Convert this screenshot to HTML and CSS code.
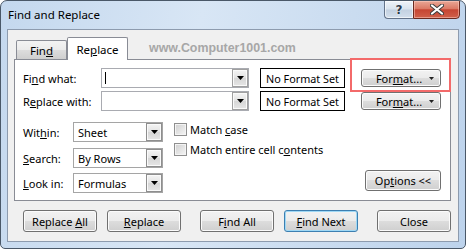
FILE: index.html
```html
<!DOCTYPE html>
<html>
<head>
<meta charset="utf-8">
<link rel="stylesheet" href="styles.css">
</head>
<body>
<div class="window">
  <div class="titlebar">
    <span class="title">Find and Replace</span>
    <div class="caption">
      <div class="cap-help"><span class="q">?</span></div>
      <div class="cap-close">
        <svg width="14" height="11" viewBox="0 0 14 11"><path d="M2 1.5 L12 9.5 M12 1.5 L2 9.5" stroke="#3c3c3c" stroke-width="4" stroke-linecap="round"/><path d="M2 1.5 L12 9.5 M12 1.5 L2 9.5" stroke="#ffffff" stroke-width="2.2" stroke-linecap="round"/></svg>
      </div>
    </div>
  </div>
  <div class="client">
    <div class="tabs">
      <div class="tab"><span>Fin<u>d</u></span></div>
      <div class="tab active"><span>Re<u>p</u>lace</span></div>
      <div class="watermark">www.Computer1001.com</div>
    </div>
    <div class="panel">
      <div class="row">
        <span class="label">Fi<u>n</u>d what:</span>
        <div class="combo"><div class="combo-text"><span class="caret"></span></div><div class="drop"><svg width="7" height="4" viewBox="0 0 7 4"><polygon points="0,0 7,0 3.5,4" fill="#000"/></svg></div></div>
        <div class="nofmt">No Format Set</div>
        <div class="fmt-wrap">
          <div class="btn fmt"><span>For<u>m</u>at...</span><svg class="fmt-arrow" width="5" height="3" viewBox="0 0 5 3"><polygon points="0,0 5,0 2.5,3" fill="#222"/></svg></div>
        </div>
      </div>
      <div class="row row2">
        <span class="label">R<u>e</u>place with:</span>
        <div class="combo"><div class="combo-text"></div><div class="drop"><svg width="7" height="4" viewBox="0 0 7 4"><polygon points="0,0 7,0 3.5,4" fill="#000"/></svg></div></div>
        <div class="nofmt">No Format Set</div>
        <div class="fmt-wrap plain">
          <div class="btn fmt"><span>For<u>m</u>at...</span><svg class="fmt-arrow" width="5" height="3" viewBox="0 0 5 3"><polygon points="0,0 5,0 2.5,3" fill="#222"/></svg></div>
        </div>
      </div>
      <div class="lower">
        <div class="selects">
          <div class="srow"><span class="slabel">Wit<u>h</u>in:</span><div class="select"><span class="stext">Sheet</span><div class="sdrop"><svg width="7" height="4" viewBox="0 0 7 4"><polygon points="0,0 7,0 3.5,4" fill="#000"/></svg></div></div></div>
          <div class="srow s2"><span class="slabel"><u>S</u>earch:</span><div class="select"><span class="stext">By Rows</span><div class="sdrop"><svg width="7" height="4" viewBox="0 0 7 4"><polygon points="0,0 7,0 3.5,4" fill="#000"/></svg></div></div></div>
          <div class="srow s3"><span class="slabel"><u>L</u>ook in:</span><div class="select"><span class="stext">Formulas</span><div class="sdrop"><svg width="7" height="4" viewBox="0 0 7 4"><polygon points="0,0 7,0 3.5,4" fill="#000"/></svg></div></div></div>
        </div>
        <div class="checks">
          <label class="check"><span class="box"></span><span>Match <u>c</u>ase</span></label>
          <label class="check c2"><span class="box"></span><span>Match entire cell c<u>o</u>ntents</span></label>
        </div>
        <div class="btn options"><span>Op<u>t</u>ions &lt;&lt;</span></div>
      </div>
    </div>
    <div class="buttons">
      <div class="btn b1"><span>Replace <u>A</u>ll</span></div>
      <div class="btn b2"><span><u>R</u>eplace</span></div>
      <div class="btn b3"><span>F<u>i</u>nd All</span></div>
      <div class="btn b4 default"><span><u>F</u>ind Next</span></div>
      <div class="btn b5"><span>Close</span></div>
    </div>
  </div>
</div>
</body>
</html>
```
FILE: styles.css
```css
* { box-sizing: border-box; }
html, body { margin: 0; padding: 0; }
body {
  width: 466px; height: 249px; overflow: hidden;
  font-family: "Noto Sans", sans-serif; font-size: 11px; color: #000;
  background: #fff;
}
u { text-decoration: underline; text-underline-offset: 1px; }

.window {
  width: 466px; height: 249px;
  border: 1px solid #4a5868;
  border-radius: 7px 7px 5px 5px;
  background: linear-gradient(100deg, #c4d8ee 0%, #d8e6f5 40%, #cadcf0 70%, #bdd3ec 100%);
  display: flex; flex-direction: column;
  overflow: hidden;
}
.titlebar { height: 28px; flex-shrink: 0; display: flex; align-items: flex-start; }
.title { margin: 6px 0 0 7px; font-size: 11.5px; line-height: 16px; }
.caption { margin-left: auto; margin-right: 5px; margin-top: -1px; display: flex; }
.cap-help {
  width: 29px; height: 19px;
  border: 1px solid #63738a; border-right: none;
  border-radius: 0 0 0 4px;
  background: linear-gradient(#eef3f9 0%, #d9e3ee 48%, #c3d1e1 52%, #d3dfec 100%);
  box-shadow: inset 0 0 0 1px rgba(255,255,255,0.6);
  display: flex; align-items: center; justify-content: center;
}
.q {
  font-family: "DejaVu Sans", sans-serif; font-weight: bold; font-size: 12px; line-height: 12px;
  color: #2c3a4c;
  text-shadow: 0 0 1px #fff, 0 0 1px #fff;
}
.cap-close {
  width: 47px; height: 19px;
  border: 1px solid #6a2a20;
  border-radius: 0 0 4px 0;
  background: linear-gradient(#e9a796 0%, #dc7a66 45%, #c64532 52%, #d0604a 100%);
  box-shadow: inset 0 0 0 1px rgba(255,210,200,0.5);
  display: flex; align-items: center; justify-content: center;
}

.client {
  flex: 1;
  margin: 0 6px 6px 6px;
  background: #f0f0f0;
  border: 1px solid #8d9bae;
  display: flex; flex-direction: column;
}

.tabs { height: 29px; display: flex; align-items: flex-end; padding-left: 8px; flex-shrink: 0; }
.tab {
  width: 51px; height: 19px;
  border: 1px solid #898c95; border-bottom: none;
  border-radius: 2px 2px 0 0;
  background: linear-gradient(#f3f3f3 0%, #ebebeb 50%, #dddddd 50%, #cfcfcf 100%);
  display: flex; align-items: center; justify-content: center;
  font-size: 11.5px;
}
.tab.active {
  width: 61px; height: 23px;
  margin-bottom: -1px;
  background: #fff;
  position: relative; z-index: 1;
  padding-top: 1px;
}
.watermark {
  margin-left: 21px; margin-bottom: 4px;
  font-family: "Liberation Sans", sans-serif; font-weight: bold; font-size: 12.4px; line-height: 14px;
  color: #a7a7a7;
}

.panel {
  margin-left: 6px;
  width: 437px; height: 142px; flex-shrink: 0;
  background: #fff;
  border: 1px solid #898c95;
  padding: 8px 8px 0 8px;
}
.row { display: flex; align-items: center; height: 20px; }
.row2 { margin-top: 3px; }
.label { width: 78px; white-space: nowrap; }
.combo {
  width: 148px; height: 20px;
  border: 1px solid #a9abb1;
  display: flex; background: #fff;
}
.combo-text { flex: 1; display: flex; align-items: center; padding-left: 3px; }
.caret { width: 1px; height: 12px; background: #000; }
.drop, .sdrop {
  width: 16px; height: 18px;
  border: 1px solid #a0a0a0;
  background: linear-gradient(#f4f4f4, #e3e3e3 50%, #d6d6d6 51%, #e6e6e6);
  box-shadow: inset 0 0 0 1px #fafafa;
  display: flex; align-items: center; justify-content: center;
}
.nofmt {
  margin-left: 11px;
  width: 85px; height: 20px;
  border: 1px solid #000;
  display: flex; align-items: center; justify-content: center;
  white-space: nowrap;
  font-size: 10.8px;
}
.fmt-wrap { margin-left: 16px; position: relative; }
.fmt-wrap::after {
  content: ""; position: absolute;
  left: -11px; right: -10px; top: -11px; bottom: -5px;
  border: 2px solid #f36a6a;
}
.fmt-wrap.plain::after { display: none; }

.btn {
  height: 22px;
  border: 1px solid #707070;
  border-radius: 3px;
  background: linear-gradient(#f2f2f2 0%, #ebebeb 50%, #dddddd 50%, #cfcfcf 100%);
  box-shadow: inset 0 0 0 1px #fbfbfb;
  display: flex; align-items: center; justify-content: center;
  white-space: nowrap;
}
.btn.fmt { width: 80px; height: 18px; position: relative; padding-right: 4px; }
.fmt-arrow { position: absolute; right: 6px; top: 7px; }
.btn.default {
  border-color: #3c7fb1;
  box-shadow: inset 0 0 0 1px #9fd8f5;
}

.lower { display: flex; margin-top: 11px; }
.selects { display: flex; flex-direction: column; }
.srow { display: flex; align-items: center; height: 20px; }
.s2 { margin-top: 6px; }
.s3 { margin-top: 5px; }
.slabel { width: 50px; white-space: nowrap; }
.select {
  width: 90px; height: 20px;
  border: 1px solid #a5a5a5;
  display: flex; align-items: center; background: #fff;
}
.stext { flex: 1; padding-left: 4px; }
.sdrop { height: 18px; border-color: #8e8e8e; }

.checks { margin-left: 11px; display: flex; flex-direction: column; padding-top: 1px; }
.check { display: flex; align-items: center; height: 13px; white-space: nowrap; }
.c2 { margin-top: 7px; }
.box {
  width: 13px; height: 13px; margin-right: 3px;
  border: 1px solid #8f8f8f;
  background: linear-gradient(135deg, #cfcfcf, #f6f6f6);
  box-shadow: inset 0 0 0 1px #f4f4f4;
}
.btn.options { margin-left: auto; margin-right: 1px; align-self: flex-end; margin-bottom: 2px; width: 76px; height: 21px; }

.buttons { display: flex; margin-top: 9px; padding-left: 15px; }
.buttons .btn { width: 74px; }
.b2 { margin-left: 10px; }
.b3 { margin-left: 19px; }
.b4 { margin-left: 10px; }
.b5 { margin-left: 19px; }
```
